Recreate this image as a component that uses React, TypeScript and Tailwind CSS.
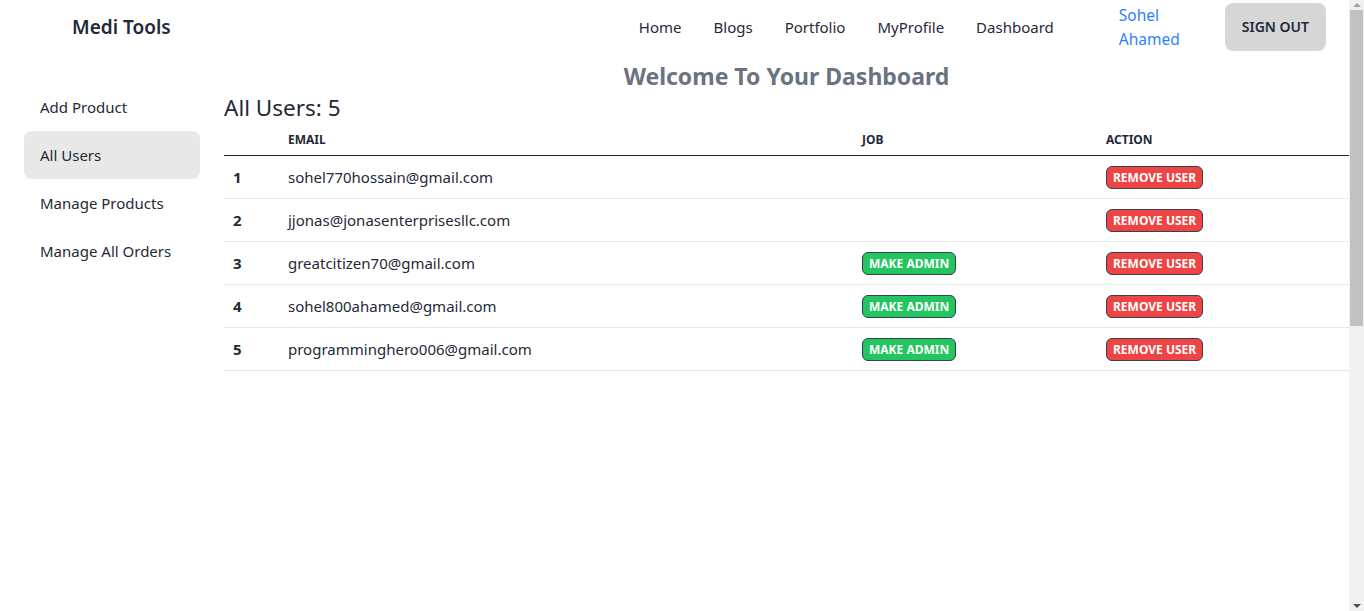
const users = [
  { email: "sohel770hossain@gmail.com", admin: true },
  { email: "jjonas@jonasenterprisesllc.com", admin: true },
  { email: "greatcitizen70@gmail.com", admin: false },
  { email: "sohel800ahamed@gmail.com", admin: false },
  { email: "programminghero006@gmail.com", admin: false },
];

const links = ["Home", "Blogs", "Portfolio", "MyProfile", "Dashboard"];
const menu = ["Add Product", "All Users", "Manage Products", "Manage All Orders"];

function Navbar() {
  return (
    <div className="flex h-[54px] items-center pl-[72px] pr-[23px]">
      <span className="text-[19px] font-semibold text-[#1f2937]">Medi Tools</span>
      <div className="ml-auto flex items-center">
        {links.map((l) => (
          <a key={l} className="px-4 pt-[1px] text-[15px] text-[#1f2937]">
            {l}
          </a>
        ))}
        <div className="ml-[49px] w-[106px] text-[15.5px] leading-6 text-blue-500">
          Sohel
          <br />
          Ahamed
        </div>
        <button className="h-12 rounded-lg bg-[#d6d6d6] px-[17px] text-sm font-semibold uppercase text-[#1f2937]">
          Sign Out
        </button>
      </div>
    </div>
  );
}

function Sidebar() {
  return (
    <ul className="w-[200px] shrink-0 pl-6 pt-[29px]">
      {menu.map((m) => (
        <li
          key={m}
          className={
            "flex h-12 items-center rounded-lg px-4 text-[15px] text-[#1f2937] " +
            (m === "All Users" ? "bg-[#e8e8e8]" : "")
          }
        >
          {m}
        </li>
      ))}
    </ul>
  );
}

function UsersTable() {
  return (
    <div className="text-[#1f2937]">
      <div className="grid h-[32px] grid-cols-[64px_574px_244px_1fr] items-center border-b border-[#222] text-xs font-bold uppercase">
        <span></span>
        <span>Email</span>
        <span>Job</span>
        <span>Action</span>
      </div>
      {users.map((u, i) => (
        <div
          key={u.email}
          className="grid h-[43px] grid-cols-[64px_574px_244px_1fr] items-center border-b border-[#e5e7eb] text-[15px]"
        >
          <span className="pl-[9px] font-bold">{i + 1}</span>
          <span>{u.email}</span>
          <span>
            {!u.admin && (
              <button className="h-[23px] rounded-md border border-[#374151] bg-[#22c55e] px-[6px] text-xs font-bold uppercase text-white">
                Make Admin
              </button>
            )}
          </span>
          <span>
            <button className="h-[23px] rounded-md border border-[#374151] bg-[#ef4444] px-[6px] text-xs font-bold uppercase text-white">
              Remove User
            </button>
          </span>
        </div>
      ))}
    </div>
  );
}

function Scrollbar() {
  return (
    <div className="flex h-screen w-[15px] shrink-0 flex-col bg-[#f1f1f1]">
      <div className="flex h-[10px] items-start justify-center pt-[3px]">
        <div className="h-0 w-0 border-x-[4px] border-b-[4px] border-x-transparent border-b-[#a3a3a3]"></div>
      </div>
      <div className="mx-[1px] h-[316px] bg-[#c1c1c1]"></div>
      <div className="flex-1"></div>
      <div className="flex h-[10px] items-end justify-center pb-[3px]">
        <div className="h-0 w-0 border-x-[4px] border-t-[4px] border-x-transparent border-t-[#505050]"></div>
      </div>
    </div>
  );
}

export default function App() {
  return (
    <div className="flex h-screen overflow-hidden bg-white font-['Noto_Sans',sans-serif]">
      <div className="min-w-0 flex-1">
        <Navbar />
        <div className="flex gap-6">
          <Sidebar />
          <div className="flex-1 pt-[6px]">
            <h1 className="text-center text-[23px] font-bold leading-8 text-[#6b7280]">Welcome To Your Dashboard</h1>
            <h2 className="text-[22.5px] leading-8 text-[#1f2937]">All Users: 5</h2>
            <UsersTable />
          </div>
        </div>
      </div>
      <Scrollbar />
    </div>
  );
}
